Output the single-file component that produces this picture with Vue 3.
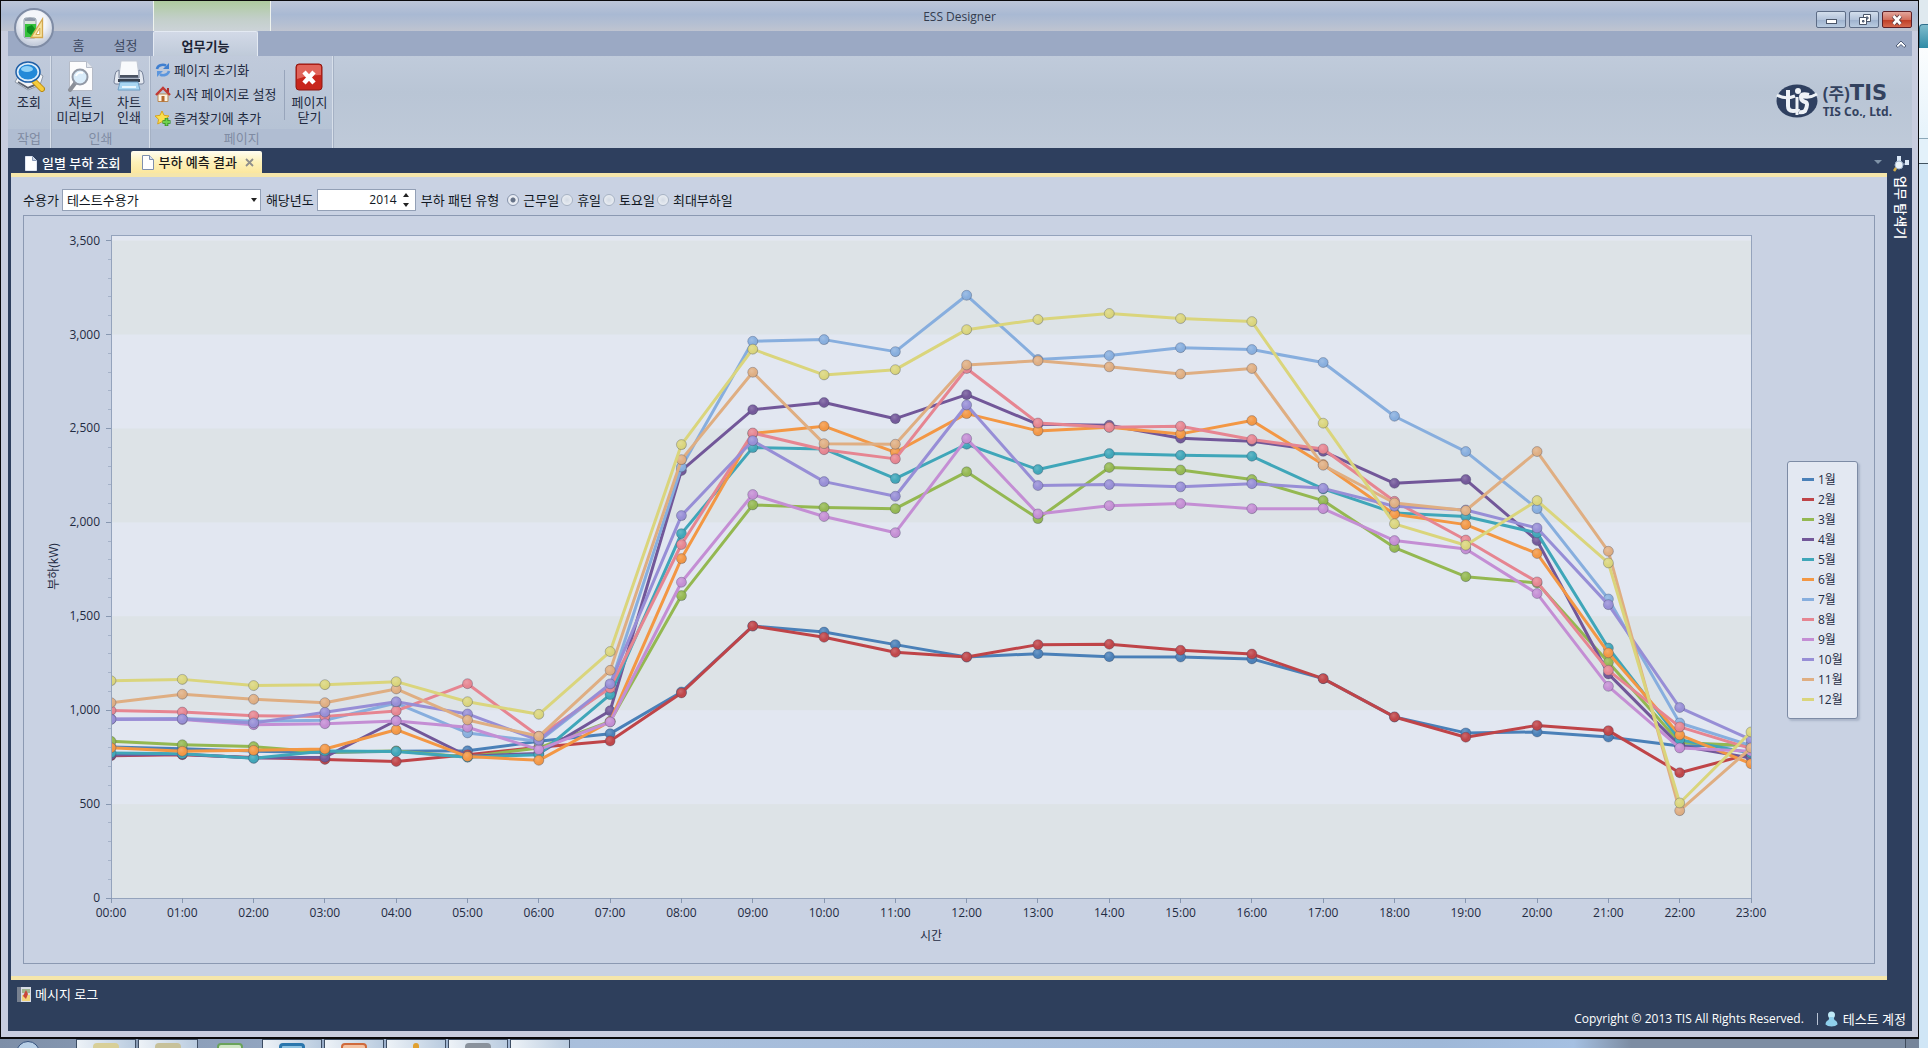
<script setup>
import { ref, computed, onMounted, onBeforeUnmount } from 'vue'

const MAX = 3530
const hours = Array.from({ length: 24 }, (_, h) => String(h).padStart(2, '0') + ':00')

const series = [
  { name: '1월', color: '#4a80b8', data: [804, 795, 782, 775, 782, 784, 834, 875, 1097, 1448, 1416, 1349, 1283, 1301, 1285, 1283, 1273, 1168, 964, 879, 884, 857, 809, 817] },
  { name: '2월', color: '#bf4448', data: [758, 763, 748, 738, 727, 763, 803, 836, 1092, 1448, 1388, 1308, 1283, 1349, 1351, 1319, 1299, 1168, 964, 856, 919, 891, 667, 768] },
  { name: '3월', color: '#94b851', data: [834, 816, 806, 776, 783, 751, 799, 940, 1610, 2093, 2079, 2073, 2269, 2020, 2292, 2279, 2228, 2116, 1866, 1711, 1677, 1255, 828, 811] },
  { name: '4월', color: '#725799', data: [762, 765, 745, 750, 945, 755, 770, 997, 2276, 2600, 2638, 2552, 2680, 2522, 2517, 2448, 2432, 2378, 2208, 2228, 1903, 1193, 811, 745] },
  { name: '5월', color: '#3fa6b9', data: [772, 768, 744, 783, 780, 750, 763, 1083, 1940, 2398, 2391, 2233, 2416, 2281, 2366, 2357, 2352, 2178, 2050, 2031, 1944, 1331, 843, 772] },
  { name: '6월', color: '#f39744', data: [800, 781, 786, 793, 896, 753, 733, 940, 1807, 2473, 2512, 2373, 2579, 2487, 2506, 2471, 2542, 2308, 2043, 1988, 1834, 1305, 868, 715] },
  { name: '7월', color: '#87aede', data: [953, 956, 941, 946, 1038, 879, 834, 1130, 2295, 2964, 2973, 2909, 3209, 2867, 2888, 2930, 2920, 2851, 2565, 2377, 2073, 1592, 932, 811] },
  { name: '8월', color: '#e68591', data: [998, 990, 971, 967, 996, 1141, 861, 1118, 1882, 2476, 2387, 2338, 2819, 2529, 2506, 2512, 2441, 2391, 2112, 1906, 1683, 1212, 911, 795] },
  { name: '9월', color: '#c48ed4', data: [953, 950, 923, 928, 943, 909, 790, 937, 1681, 2148, 2031, 1945, 2446, 2045, 2089, 2100, 2073, 2073, 1903, 1858, 1621, 1127, 799, 781] },
  { name: '10월', color: '#978ed6', data: [951, 953, 932, 989, 1045, 980, 840, 1140, 2036, 2435, 2217, 2139, 2625, 2196, 2201, 2189, 2206, 2181, 2086, 2066, 1970, 1562, 1014, 843] },
  { name: '11월', color: '#dfae82', data: [1040, 1085, 1058, 1040, 1113, 948, 861, 1212, 2334, 2799, 2419, 2416, 2838, 2860, 2828, 2790, 2819, 2304, 2103, 2063, 2377, 1846, 465, 799] },
  { name: '12월', color: '#dad57c', data: [1157, 1164, 1131, 1136, 1152, 1045, 978, 1312, 2414, 2922, 2785, 2813, 3026, 3080, 3112, 3085, 3069, 2528, 1992, 1878, 2116, 1784, 506, 884] }
]

const chart = ref(null)
const width = ref(1753)
const height = ref(746)
const margin = { left: 87, right: 26, top: 19, bottom: 65 }
const plotW = computed(() => Math.max(100, width.value - margin.left - margin.right))
const plotH = computed(() => Math.max(100, height.value - margin.top - margin.bottom))
const x = h => margin.left + (h / 23) * plotW.value
const y = v => margin.top + (1 - v / MAX) * plotH.value
const line = d => d.map((v, h) => `${x(h)},${y(v)}`).join(' ')

const majors = [0, 500, 1000, 1500, 2000, 2500, 3000, 3500]
const minors = Array.from({ length: 36 }, (_, i) => i * 100).filter(v => v % 500)
const bands = [0, 1000, 2000, 3000]

let observer
function measure() {
  const box = chart.value.getBoundingClientRect()
  width.value = Math.round(box.width)
  height.value = Math.round(box.height)
}
onMounted(() => {
  measure()
  observer = new ResizeObserver(measure)
  observer.observe(chart.value)
})
onBeforeUnmount(() => observer && observer.disconnect())

const customer = ref('테스트수용가')
const year = ref(2014)
const pattern = ref('근무일')
const patterns = ['근무일', '휴일', '토요일', '최대부하일']
const tasks = [
  { kind: 'folder', active: true },
  { kind: 'file', active: true },
  { kind: 'green', active: false },
  { kind: 'blue', active: true },
  { kind: 'orange', active: true },
  { kind: 'star', active: true },
  { kind: 'grey', active: true },
  { kind: 'none', active: true }
]
</script>

<template>
  <div class="desktop">
    <div class="screen">
      <div class="window">
        <header class="titlebar">
          <div class="context-head"></div>
          <h1>ESS Designer</h1>
          <div class="win-buttons">
            <button type="button" aria-label="최소화">
              <svg width="28" height="14" viewBox="0 0 28 14"><rect x="9.500" y="6.500" width="10" height="4" fill="#fff" stroke="#4a5568" /></svg>
            </button>
            <button type="button" aria-label="이전 크기로">
              <svg width="28" height="14" viewBox="0 0 28 14" fill="#fff" stroke="#4a5568"><path d="M13.500 1.500h7v7h-7z" /><path d="M16 4h2v2h-2z" fill="#9fb2cc" /><path d="M9.500 4.500h7v7h-7z" /><path d="M12.500 7.500h1.500v1.500h-1.500z" fill="#9fb2cc" /></svg>
            </button>
            <button type="button" class="close" aria-label="닫기">
              <svg width="28" height="14" viewBox="0 0 28 14"><path d="M10.500 3l7 8M17.500 3l-7 8" stroke="#5b3a42" stroke-width="4.500" /><path d="M10.500 3l7 8M17.500 3l-7 8" stroke="#fff" stroke-width="2.800" /></svg>
            </button>
          </div>
        </header>

        <button type="button" class="orb" aria-label="응용 프로그램 메뉴">
          <svg width="24" height="26" viewBox="0 0 24 26">
            <rect x="2" y="3" width="12" height="20" rx="2" fill="#d9e4dc" stroke="#8c9aa8" />
            <path d="M3 4q5-3 10 0v2H3z" fill="#8f99ab" />
            <rect x="3" y="9" width="11" height="13" fill="#35c23c" />
            <path d="M5 12l5-2 3 4-4 6-4-3z" fill="#0c8f1f" />
            <path d="M20.500 4v18.500H9z" fill="#f7e3a0" stroke="#d3a84f" stroke-width="1.300" />
            <path d="M17.800 13v6.500h-4z" fill="#fff" stroke="#d3a84f" />
          </svg>
        </button>

        <nav class="ribbon-tabs">
          <button type="button" class="rt home">홈</button>
          <button type="button" class="rt">설정</button>
          <button type="button" class="rt active">업무기능</button>
          <button type="button" class="collapse" aria-label="리본 최소화">
            <svg width="12" height="10" viewBox="0 0 12 10"><path d="M1 7L6 2l5 5-2 1.500-3-3-3 3z" fill="#fff" stroke="#4f5d78" /></svg>
          </button>
        </nav>

        <section class="ribbon">
          <div class="group">
            <div class="group-body">
              <button type="button" class="big w42">
                <svg width="32" height="32" viewBox="0 0 32 32">
                  <path d="M2 22l13 8 12-5 3-9-8-6L7 13z" fill="#f3f5f8" stroke="#8e99a8" />
                  <path d="M5 22l10 6 9-4" fill="none" stroke="#59616e" stroke-width="2" />
                  <path d="M21 21l8 8" stroke="#b98a12" stroke-width="6" stroke-linecap="round" /><path d="M21 21l8 8" stroke="#f5cc3c" stroke-width="4" stroke-linecap="round" />
                  <ellipse cx="15" cy="12" rx="12" ry="10" fill="#dfeefa" stroke="#1f5fa6" stroke-width="1.500" />
                  <ellipse cx="15" cy="12" rx="9.500" ry="7.500" fill="#2389d8" /><ellipse cx="14" cy="9" rx="6" ry="3" fill="#8fd1f7" />
                </svg>
                <span>조회</span>
              </button>
            </div>
            <div class="group-name">작업</div>
          </div>
          <div class="group">
            <div class="group-body">
              <button type="button" class="big w56">
                <svg width="32" height="32" viewBox="0 0 32 32">
                  <path d="M4.500 1.500h17l6 6v23h-23z" fill="#fcfcfd" stroke="#b6bcc8" /><path d="M21.500 1.500v6h6" fill="#e3e7ee" stroke="#b6bcc8" />
                  <path d="M11 22l-6 8" stroke="#8b8f98" stroke-width="4" stroke-linecap="round" />
                  <circle cx="15" cy="17" r="7.500" fill="#d9ecfa" stroke="#9299a6" stroke-width="2" /><path d="M11 16a5 5 0 0 1 7-3" fill="none" stroke="#fff" stroke-width="2" />
                </svg>
                <span>차트<br>미리보기</span>
              </button>
              <button type="button" class="big w40">
                <svg width="32" height="32" viewBox="0 0 32 32">
                  <path d="M8 1h16l2 15H6z" fill="#f8fafc" stroke="#c2c9d5" /><path d="M7 15h18v3H7z" fill="#4a5362" />
                  <path d="M2 15q0-4 4-5v8h20v-8q4 1 4 5l1 7q0 2-2 2H3q-2 0-2-2z" fill="#e3e8f0" stroke="#77839a" />
                  <path d="M5 19h22v3H5z" fill="#37404f" /><path d="M7 22h18l2 8H5z" fill="#a9d6f2" stroke="#6f9ec4" /><path d="M9 26h14v2H9z" fill="#e8f6fd" />
                </svg>
                <span>차트<br>인쇄</span>
              </button>
            </div>
            <div class="group-name">인쇄</div>
          </div>
          <div class="group">
            <div class="group-body">
              <div class="small-list">
                <button type="button" class="small">
                  <svg width="16" height="16" viewBox="0 0 16 16" fill="none"><path d="M2 7a6 5 0 0 1 9-3.500" stroke="#3f7fd0" stroke-width="2.600" /><path d="M14 1v6H8z" fill="#3f7fd0" /><path d="M14 9a6 5 0 0 1-9 3.500" stroke="#5c96dd" stroke-width="2.600" /><path d="M2 15V9h6z" fill="#5c96dd" /></svg>
                  페이지 초기화
                </button>
                <button type="button" class="small">
                  <svg width="16" height="16" viewBox="0 0 16 16"><path d="M3 8h10v7.500H3z" fill="#fdf3e4" stroke="#b9874f" /><path d="M6.500 10h3v5.500h-3z" fill="#b4692f" /><path d="M12 2h2v4h-2z" fill="#a33" /><path d="M1 9l7-7 7 7" fill="none" stroke="#c23a34" stroke-width="2.400" /></svg>
                  시작 페이지로 설정
                </button>
                <button type="button" class="small">
                  <svg width="16" height="16" viewBox="0 0 16 16"><path d="M7 1l2 4.300 5 .7-3.600 3.300.9 4.700L7 11.700 2.700 14l.9-4.700L0 6l5-.7z" fill="#fbe04e" stroke="#d9a51e" /><path d="M11.500 8v8M7.500 12h8" stroke="#2c8a1e" stroke-width="3.600" /><path d="M11.500 8.500v7M8 12h7" stroke="#6fd14d" stroke-width="2" /></svg>
                  즐겨찾기에 추가
                </button>
              </div>
              <div class="sep"></div>
              <button type="button" class="big w46">
                <svg width="32" height="32" viewBox="0 0 32 32">
                  <rect x="3" y="4" width="26" height="26" rx="3" fill="#c8261c" stroke="#8e1710" /><path d="M4 7q0-2 2-2h20q2 0 2 2v8q-12 0-24 4z" fill="#e0645a" />
                  <path d="M11 12l10 11M21 12L11 23" stroke="#fff" stroke-width="4.500" />
                </svg>
                <span>페이지<br>닫기</span>
              </button>
            </div>
            <div class="group-name">페이지</div>
          </div>
          <div class="brand">
            <svg width="42" height="34" viewBox="0 0 42 34">
              <ellipse cx="21" cy="17" rx="20.500" ry="16.500" fill="#2f4060" />
              <g fill="none" stroke="#eef2f7" stroke-width="4">
                <path d="M1 11q8 5 18 1M25 12q8 3 16-2" stroke-width="3" />
                <path d="M12 6v16q0 5 5 5t5-2" /><path d="M21 13v18" stroke-width="3" /><path d="M33 11q-8-2-8 2t4 5 0 9q-3 2-6 1" />
              </g>
              <circle cx="22" cy="7" r="3" fill="#eef2f7" />
            </svg>
            <div class="brand-text">
              <div class="b1"><span>(주)</span><strong>TIS</strong></div>
              <div class="b2">TIS Co., Ltd.</div>
            </div>
          </div>
        </section>

        <div class="workspace">
          <main class="pane">
            <div class="doc-tabs">
              <button type="button" class="doc">
                <svg width="12" height="15" viewBox="0 0 12 15"><path d="M.500.500h7l4 4v10H.500z" fill="#fff" stroke="#dfe6f2" /><path d="M7.500.500v4h4" fill="#c4cfe2" stroke="#8b9bb8" /></svg>
                일별 부하 조회
              </button>
              <div class="doc active">
                <svg width="12" height="15" viewBox="0 0 12 15"><path d="M.500.500h7l4 4v10H.500z" fill="#fff" stroke="#7f90ae" /><path d="M7.500.500v4h4" fill="#dbe3f0" stroke="#7f90ae" /></svg>
                부하 예측 결과
                <button type="button" class="doc-close" aria-label="탭 닫기">
                  <svg width="9" height="9" viewBox="0 0 9 9"><path d="M1 1l7 7M8 1L1 8" stroke="#8f8f8c" stroke-width="1.800" /></svg>
                </button>
              </div>
              <button type="button" class="doc-menu" aria-label="탭 목록"><svg width="8" height="4" viewBox="0 0 8 4"><path d="M0 0h8L4 4z" fill="#7f93a8" /></svg></button>
            </div>

            <div class="page">
              <form class="filters" @submit.prevent>
                <label for="customer">수용가</label>
                <div class="combo">
                  <select id="customer" v-model="customer"><option>테스트수용가</option></select>
                  <svg width="6" height="4" viewBox="0 0 6 4"><path d="M0 0h6L3 4z" fill="#222" /></svg>
                </div>
                <label for="year">해당년도</label>
                <div class="spin">
                  <input id="year" v-model="year" type="text" inputmode="numeric">
                  <div class="spin-btns">
                    <button type="button" aria-label="증가" @click="year++"><svg width="6" height="4" viewBox="0 0 6 4"><path d="M0 4h6L3 0z" fill="#222" /></svg></button>
                    <button type="button" aria-label="감소" @click="year--"><svg width="6" height="4" viewBox="0 0 6 4"><path d="M0 0h6L3 4z" fill="#222" /></svg></button>
                  </div>
                </div>
                <div class="radios" role="radiogroup" aria-labelledby="pattern-label">
                  <span id="pattern-label">부하 패턴 유형</span>
                  <label v-for="p in patterns" :key="p"><input v-model="pattern" type="radio" name="pattern" :value="p">{{ p }}</label>
                </div>
              </form>

              <section class="panel">
                <svg ref="chart" class="chart" role="img" aria-label="월별 시간대 부하">
                  <defs>
                    <clipPath id="plot"><rect :x="margin.left" :y="margin.top" :width="plotW" :height="plotH" /></clipPath>
                    <radialGradient id="shine" cx="0.4" cy="0.35" r="0.7">
                      <stop offset="0" stop-color="#fff" stop-opacity="0.2" /><stop offset="0.6" stop-color="#fff" stop-opacity="0" /><stop offset="1" stop-color="#000" stop-opacity="0.15" />
                    </radialGradient>
                  </defs>
                  <rect class="plot-bg" :x="margin.left" :y="margin.top" :width="plotW" :height="plotH" />
                  <rect v-for="b in bands" :key="b" class="band" :x="margin.left" :y="y(b + 500)" :width="plotW" :height="y(b) - y(b + 500)" />
                  <g clip-path="url(#plot)">
                    <g v-for="s in series" :key="s.name">
                      <polyline :points="line(s.data)" fill="none" :stroke="s.color" stroke-width="3" stroke-linejoin="round" />
                      <template v-for="(v, h) in s.data" :key="h">
                        <circle :cx="x(h)" :cy="y(v)" r="5" :fill="s.color" />
                        <circle :cx="x(h)" :cy="y(v)" r="5" fill="url(#shine)" class="dot" />
                      </template>
                    </g>
                  </g>
                  <rect class="frame" :x="margin.left" :y="margin.top" :width="plotW" :height="plotH" />
                  <g class="ticks">
                    <path v-for="v in majors" :key="v" :d="`M${margin.left - 5} ${y(v)}h5`" />
                    <path v-for="v in minors" :key="v" :d="`M${margin.left - 3} ${y(v)}h3`" class="minor" />
                    <path v-for="(t, h) in hours" :key="t" :d="`M${x(h)} ${margin.top + plotH}v5`" />
                  </g>
                  <g class="labels">
                    <text v-for="v in majors" :key="v" :x="margin.left - 11" :y="y(v) + 4" text-anchor="end">{{ v.toLocaleString('en-US') }}</text>
                    <text v-for="(t, h) in hours" :key="t" :x="x(h)" :y="margin.top + plotH + 19" text-anchor="middle">{{ t }}</text>
                    <text :x="margin.left + plotW / 2" :y="margin.top + plotH + 42" text-anchor="middle">시간</text>
                    <text :transform="`translate(34 ${margin.top + plotH / 2}) rotate(-90)`" text-anchor="middle">부하(kW)</text>
                  </g>
                </svg>
                <ul class="legend">
                  <li v-for="s in series" :key="s.name"><i :style="{ background: s.color }"></i>{{ s.name }}</li>
                </ul>
              </section>
            </div>
          </main>
          <aside class="side">
            <button type="button">
              <svg width="16" height="16" viewBox="0 0 16 16"><path d="M4 0h4v5H4zM12 4h4v5h-4z" fill="#dbe8f7" /><path d="M6 5v3M8 8h4" stroke="#b9c8dd" /><circle cx="6" cy="9" r="4" fill="#e9f2fa" stroke="#9fb3cc" /><path d="M3 12l-2 3" stroke="#d6b04a" stroke-width="2.500" /></svg>
              <span>업무 탐색기</span>
            </button>
          </aside>
        </div>

        <footer class="bottom">
          <button type="button" class="log">
            <svg width="14" height="15" viewBox="0 0 14 15"><path d="M0 0h14v15H0z" fill="#d9dde6" /><path d="M0 0h4v15H0z" fill="#77808f" /><path d="M5 2h8v4H5z" fill="#9fb58f" /><path d="M5 8h8v6H5z" fill="#f2d47c" /><path d="M9 3l2 4-2 5-3-3z" fill="#c9463a" /></svg>
            메시지 로그
          </button>
          <div class="status">
            <span>Copyright © 2013 TIS All Rights Reserved.</span>
            <span class="user">
              <svg width="13" height="16" viewBox="0 0 13 16"><circle cx="6.500" cy="4" r="3.500" fill="#bfe9f7" /><path d="M4.500 6h4l1 3q3 1 3 4.500-2 2-6 2t-6-2Q.500 10 3.500 9z" fill="#8fd0ec" /></svg>
              테스트 계정
            </span>
          </div>
        </footer>
      </div>

      <div class="taskbar">
        <div class="start"></div>
        <div v-for="(t, i) in tasks" :key="i" class="task" :class="{ on: t.active }"><b :class="t.kind"></b></div>
        <div class="tray"></div>
        <div class="peek"></div>
      </div>
    </div>
    <div class="behind">
      <div class="behind-top"></div>
      <div class="behind-tab"></div>
      <div class="behind-body"></div>
      <div class="behind-bar"></div>
    </div>
  </div>
</template>

<style>
body { margin: 0; background: #d0e4f4; }
</style>

<style scoped>
* { box-sizing: border-box; }
button { font: inherit; color: inherit; background: none; border: 0; padding: 0; margin: 0; }
svg { display: block; flex: none; }
.desktop {
  display: flex;
  min-height: 100vh;
  font: 13px/16px "Open Sans", "Noto Sans CJK KR", sans-serif;
  color: #1f2a3f;
}
.screen { flex: 1; min-width: 0; display: flex; flex-direction: column; }
.window {
  position: relative;
  flex: 1;
  display: flex;
  flex-direction: column;
  border: 1px solid #0a0a0c;
  border-bottom-width: 2px;
  padding: 0 6px 6px 7px;
  background: #c8cddf;
}
.titlebar {
  display: flex;
  position: relative;
  height: 30px;
  margin: 0 -6px 0 -7px;
  padding: 0 6px 0 152px;
  align-items: center;
  background: linear-gradient(#bdc6d8, #a9b9d3 45%, #b4bfd2 75%, #bfc4d0);
}
.context-head {
  width: 118px;
  height: 30px;
  border: solid #eef3ee;
  border-width: 0 1px;
  background: linear-gradient(#aecb9f, #c3cfca 60%, #ccd3d8);
}
h1 { flex: 1; margin: 0; padding: 2px 168px 0 0; font-size: 12px; font-weight: 400; text-align: center; color: #333c4e; }
.win-buttons { display: flex; gap: 3px; padding-top: 7px; }
.win-buttons button {
  width: 30px; height: 17px; border: 1px solid #5d6c86; border-radius: 2px;
  background: linear-gradient(#d3deec, #b3c3da 50%, #9db1cd 51%, #b9cbe0);
}
.win-buttons .close { border-color: #5e2027; background: linear-gradient(#e3a69c, #d2705e 50%, #bd3a22 51%, #d5694e); }
.orb {
  position: absolute; left: 13px; top: 7px; width: 40px; height: 40px; border-radius: 50%;
  border: 2px solid #7f8ca5; background: radial-gradient(circle at 50% 35%, #f4f6fa 40%, #c4ccdb 75%, #eef1f6);
  display: flex; align-items: center; justify-content: center;
}
.ribbon-tabs { display: flex; height: 25px; padding-left: 48px; background: #9ba9c4; color: #3c4760; }
.rt { width: 49px; padding-top: 3px; }
.rt.home { width: 45px; }
.rt.active {
  width: 105px; margin-left: 3px; font-weight: 700; color: #1c2435;
  border: 1px solid #e4eaf3; border-bottom: 0; border-radius: 2px 2px 0 0; background: linear-gradient(#d2d9e7, #bfcad9);
}
.collapse { margin-left: auto; padding-right: 5px; }
.ribbon { display: flex; height: 92px; background: linear-gradient(#c0cbdb, #b9c5d5 40%, #bfcad9); }
.group { display: flex; flex-direction: column; border-right: 1px solid #d7dfea; box-shadow: 1px 0 #a5b1c4; background: #bac6d7; margin-right: 1px; }
.group-body { height: 73px; display: flex; background: linear-gradient(#c0cadb, #b6c3d5); }
.group-name { height: 19px; text-align: center; line-height: 19px; color: #7f8ba2; background: #b0bdd2; }
.big { display: flex; flex-direction: column; align-items: center; align-self: flex-start; padding-top: 4px; line-height: 15px; white-space: nowrap; text-align: center; }
.big span { padding-top: 3px; }
.w42 { width: 42px; }
.w56 { width: 57px; }
.w40 { width: 40px; }
.w46 { width: 46px; }
.small-list { display: flex; flex-direction: column; padding: 0 8px 0 4px; }
.small { display: flex; align-items: center; gap: 3px; height: 24px; padding-top: 4px; white-space: nowrap; }
.sep { width: 1px; height: 50px; margin: 14px 1px 0 0; background: #98a5bb; }
.brand { display: flex; align-items: center; gap: 5px; margin-left: auto; padding: 0 20px 2px 0; color: #33425f; }
.b1 { display: flex; align-items: center; height: 19px; font-size: 17px; line-height: 19px; font-weight: 700; }
.b1 strong { font: 700 21px/19px "DejaVu Sans", sans-serif; }
.b2 { padding-top: 2px; font: 700 12px/14px "Noto Sans", sans-serif; }
.workspace { flex: 1; display: flex; background: #2e3f5e; }
.pane { flex: 1; min-width: 0; display: flex; flex-direction: column; padding-left: 3px; }
.doc-tabs { display: flex; align-items: flex-end; height: 25px; color: #fff; }
.doc { display: flex; align-items: center; gap: 5px; height: 22px; padding: 2px 10px 0 14px; white-space: nowrap; font-weight: 500; }
.doc.active { padding: 0 8px 0 11px; color: #1a1a1a; background: linear-gradient(#fffdf2, #fdf1b9 50%, #fbe79f); border-radius: 2px 2px 0 0; }
.doc-close { margin-left: 3px; }
.doc-menu { margin-left: auto; align-self: center; padding: 3px 5px 0 0; }
.page { flex: 1; display: flex; flex-direction: column; border: solid #f5e6ab; border-width: 4px 0; padding: 12px; background: #c9d2e3; }
.filters { display: flex; align-items: center; flex-wrap: wrap; margin-bottom: 4px; color: #101722; }
.combo { position: relative; width: 199px; margin: 0 5px 0 3px; }
.combo select {
  display: block; width: 100%; height: 22px; appearance: none; padding: 0 16px 1px 4px; border: 1px solid #93a0b6;
  border-radius: 0; background: #fff; color: inherit; font: inherit;
}
.combo svg { position: absolute; right: 4px; top: 9px; pointer-events: none; }
.spin { display: flex; width: 99px; height: 22px; margin: 0 5px 0 3px; border: 1px solid #93a0b6; background: #fff; }
.spin input { flex: 1; min-width: 0; border: 0; padding: 0 6px 0 0; background: none; text-align: right; font: inherit; font-size: 12px; color: inherit; }
.spin-btns { display: flex; flex-direction: column; justify-content: space-around; width: 12px; }
.radios { display: flex; align-items: center; gap: 2px; }
#pattern-label { margin-right: 6px; }
.radios label { display: flex; align-items: center; gap: 4px; }
.radios input {
  appearance: none; width: 12px; height: 12px; margin: 0; border: 1px solid #a7b3c4; border-radius: 50%;
  background: radial-gradient(circle, #d3dae4, #f1f4f8);
}
.radios input:checked { border-color: #8794ab; background: radial-gradient(circle, #667287 0 2px, #e8ecf3 3px); }
.panel { flex: 1; display: flex; align-items: center; border: 1px solid #8b99b2; background: #c9d2e3; }
.chart { flex: 1; min-width: 0; min-height: 400px; align-self: stretch; overflow: visible; }
.plot-bg { fill: #e2e7f1; }
.band { fill: #dde3e7; }
.frame { fill: none; stroke: #94a3bc; shape-rendering: crispEdges; }
.ticks path { stroke: #8797b0; shape-rendering: crispEdges; }
.ticks .minor { stroke: #a5b2c8; }
.dot { stroke: #3c4660; stroke-opacity: 0.3; }
.labels { font-size: 12px; fill: #1f2b42; }
.legend {
  width: 71px; margin: 0 16px 0 10px; padding: 8px 0 8px 14px; list-style: none;
  border: 1px solid #7d8ba5; border-radius: 3px; background: #e3e8f2; box-shadow: 2px 2px 2px #aab5c9; font-size: 12px; color: #1f2b42;
}
.legend li { display: flex; align-items: center; gap: 4px; height: 20px; }
.legend i { width: 12px; height: 3px; }
.side { width: 25px; padding: 8px 0 0 6px; color: #fff; }
.side button { display: flex; flex-direction: column; align-items: center; gap: 4px; }
.side span { writing-mode: vertical-rl; text-orientation: sideways; font-weight: 500; }
.bottom { display: flex; flex-direction: column; background: #2e3f5c; color: #fff; height: 51px; }
.log { display: flex; align-items: center; gap: 4px; align-self: flex-start; padding: 6px 0 0 9px; }
.status { display: flex; justify-content: flex-end; align-items: center; margin-top: auto; padding: 0 6px 4px 0; font-size: 12px; }
.user { display: flex; align-items: center; gap: 5px; margin-left: 13px; padding-left: 8px; position: relative; font-size: 13px; }
.user::before { content: ""; position: absolute; left: 0; top: 2px; height: 12px; width: 1px; background: #b9c3d4; }
.taskbar { display: flex; height: 9px; overflow: hidden; background: linear-gradient(90deg, #7e8fa8, #a9bfdc 30%, #9fb8d8 75%, #a5c0e2 82%, #7d8da3 85%); }
.start { width: 24px; height: 24px; border-radius: 50%; margin: 2px 36px 0 16px; border: 1px solid #34507c; background: #b8cfe6; flex: none; }
.task { width: 60px; margin-right: 2px; padding-top: 4px; flex: none; display: flex; justify-content: center; }
.task.on { border: 1px solid #3c4c62; border-bottom: 0; padding-top: 3px; background: linear-gradient(90deg, #edf2f7, #b9cbdf); }
.task b { width: 26px; height: 20px; border-radius: 4px; }
.folder { background: #d8cf98; }
.file { background: #c7c19a; }
.green { border: 2px solid #6aa35a; background: #cfe6c4; }
.blue { border: 3px solid #2a76ad; background: #8fc3e2; }
.orange { border: 2px solid #cf6a3c; background: #f3c3a4; }
.task .star { width: 6px; background: #e0a030; }
.grey { background: #8a929c; }
.tray { flex: 1; }
.peek { width: 14px; border-left: 1px solid #3f4b5c; background: #76859a; }
.behind { width: 9px; background: #d0e6f6; }
.behind-top { height: 24px; background: #dfe9ef; }
.behind-tab { height: 24px; border-radius: 4px 0 0 0; border: 1px solid #2f6f8c; border-width: 1px 0 0 1px; background: linear-gradient(#7fbccd, #2f8ba6); }
.behind-body { height: 90px; background: linear-gradient(#fbfdfe, #e6f3fb); }
.behind-bar { height: 26px; border: solid #8ba7b8; border-width: 1px 0; border-bottom-color: #41525f; background: #e3f1fa; }
</style>
